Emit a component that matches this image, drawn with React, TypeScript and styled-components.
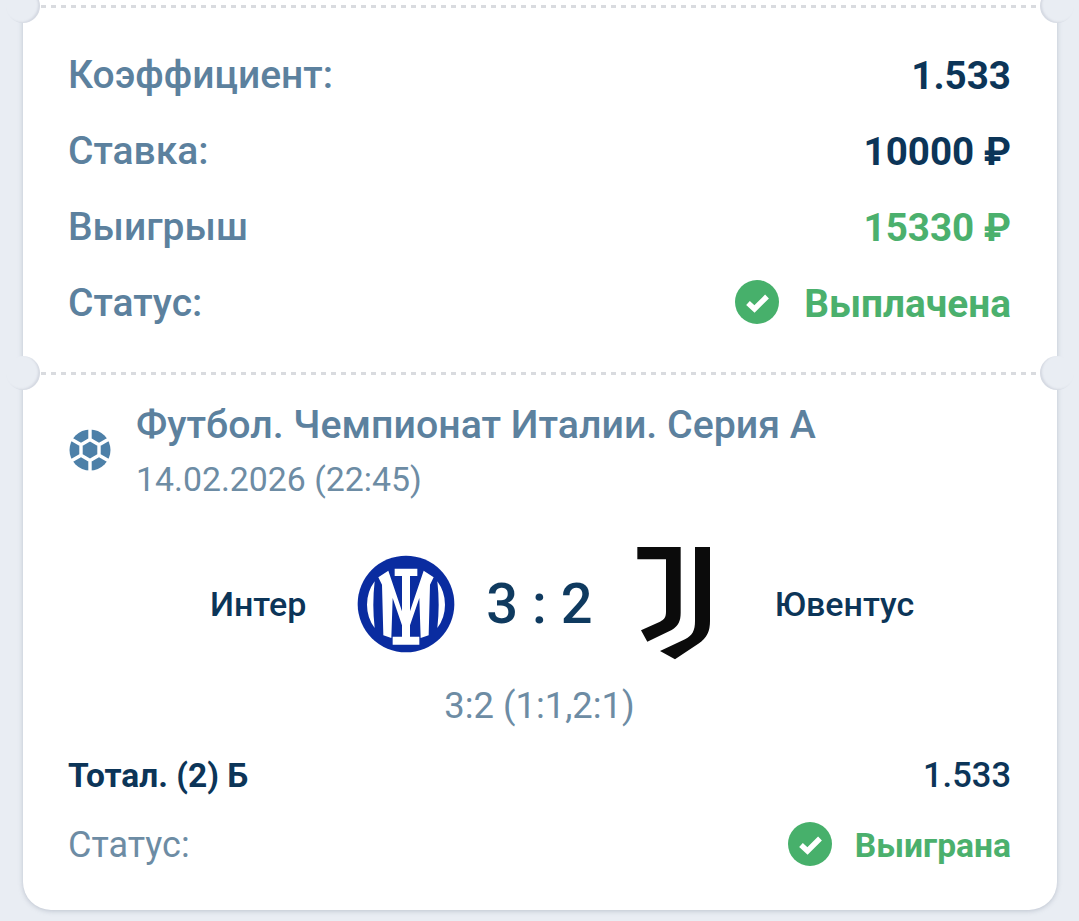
import React from 'react'
import styled, { createGlobalStyle } from 'styled-components'

const GlobalStyle = createGlobalStyle`
  html, body {
    margin: 0;
    padding: 0;
    background: #e9edf3;
    font-family: Roboto, "Noto Sans", sans-serif;
  }
`

const Page = styled.div`
  width: 1079px;
  height: 921px;
  overflow: hidden;
  box-sizing: border-box;
  padding: 0 22px 0 23px;
`

const Card = styled.div`
  position: relative;
  display: flow-root;
  height: 910px;
  background: #ffffff;
  border-radius: 0 0 28px 28px;
  box-shadow: 0 1px 5px rgba(120, 130, 150, 0.4);
`

const Notch = styled.span<{ $side: 'left' | 'right'; $top: number }>`
  position: absolute;
  top: ${p => p.$top - 17}px;
  ${p => p.$side}: -17px;
  width: 34px;
  height: 34px;
  border-radius: 50%;
  background: #e9edf3;
  box-shadow: inset ${p => (p.$side === 'left' ? -2 : 2)}px -1px 2px rgba(120, 130, 150, 0.18);
`

const Divider = styled.div<{ $top?: number }>`
  height: 3px;
  margin: 0 18px;
  margin-top: ${p => p.$top ?? 0}px;
  background: repeating-linear-gradient(90deg, #d9dbdf 0 5px, transparent 5px 10px);
`

const Summary = styled.div`
  padding: 29px 46px 31px 45px;
`

const Row = styled.div<{ $height: number }>`
  display: flex;
  align-items: center;
  justify-content: space-between;
  height: ${p => p.$height}px;
`

const Label = styled.span`
  font-size: 39px;
  font-weight: 500;
  color: #5c819e;
`

const Value = styled.span<{ $green?: boolean }>`
  font-size: 38.6px;
  font-weight: 700;
  color: ${p => (p.$green ? '#4bb06d' : '#0c3558')};
`

const Status = styled.span<{ $small?: boolean }>`
  display: flex;
  align-items: center;
  gap: ${p => (p.$small ? 23 : 25)}px;
  font-size: ${p => (p.$small ? 33.6 : 38.8)}px;
  font-weight: 700;
  color: #4bb06d;
`

const Event = styled.div`
  padding: 22px 46px 0 45px;
`

const EventHead = styled.div`
  display: flex;
  align-items: center;
  gap: 25px;
`

const EventTitle = styled.div`
  padding-top: 2px;
  font-size: 39.3px;
  font-weight: 500;
  line-height: 53px;
  color: #5c819e;
`

const EventDate = styled.div`
  font-size: 33.8px;
  line-height: 55px;
  color: #6d8ca4;
`

const Match = styled.div`
  display: grid;
  grid-template-columns: 1fr auto 1fr;
  align-items: center;
  height: 120px;
  margin-top: 34px;
`

const Side = styled.div<{ $right?: boolean }>`
  display: flex;
  align-items: center;
  justify-content: ${p => (p.$right ? 'flex-start' : 'flex-end')};
  gap: ${p => (p.$right ? 55 : 52)}px;
`

const Team = styled.span`
  font-size: 34px;
  font-weight: 500;
  color: #0c3558;
`

const Score = styled.div`
  font-size: 56px;
  font-weight: 500;
  padding: 0 32px;
  color: #0f3a5f;
`

const SubScore = styled.div`
  margin-top: 20px;
  font-size: 36.4px;
  line-height: 50px;
  text-align: center;
  color: #6d8ca4;
`

const Bets = styled.div`
  margin-top: 9px;
`

const BetName = styled.span`
  font-size: 33.5px;
  font-weight: 700;
  color: #0c3558;
`

const BetOdd = styled.span`
  font-size: 34.5px;
  font-weight: 500;
  color: #0c3558;
`

const StatusLabel = styled.span`
  font-size: 36px;
  color: #6d8ca4;
`

const BallSvg = styled.svg`
  margin: 0 0 4px 1px;
  flex: none;
`

const CheckSvg = styled.svg`
  margin-top: -3px;
  flex: none;
`

const InterSvg = styled.svg`
  margin: 0 -8px;
`

const JuveSvg = styled.svg`
  margin-left: 5px;
`

const CheckIcon = () => (
  <CheckSvg width="44" height="44" viewBox="0 0 44 44">
    <circle cx="22" cy="22" r="22" fill="#47b06b" />
    <path d="M13 23l6.5 6L32 16.5" fill="none" stroke="#fff" strokeWidth="5.4" />
  </CheckSvg>
)

const BallIcon = () => (
  <BallSvg width="42" height="42" viewBox="0 0 42 42">
    <circle cx="21" cy="21" r="20.5" fill="#4d80a8" />
    <path
      d="M21 10.5L30 15.8V26.2L21 31.5L12 26.2V15.8ZM21 10.5V0M30 15.8L40 10M30 26.2L40 32M21 31.5V42M12 26.2L2 32M12 15.8L2 10"
      fill="none"
      stroke="#fff"
      strokeWidth="3.4"
    />
  </BallSvg>
)

const InterLogo = () => (
  <InterSvg width="112" height="112" viewBox="0 0 336 336">
    <circle cx="168" cy="168" r="145" fill="#0a2ca0" />
    <path d="M74 100A118 118 0 0 0 74 240Q66 170 74 100Z" fill="#fff" />
    <path d="M262 100A118 118 0 0 1 262 240Q270 170 262 100Z" fill="#fff" />
    <path d="M134 62H202V84H180V266H208V290H128V266H156V84H134Z" fill="#fff" />
    <path d="M85 88L115 68L156 190V232L128 150L124 270L100 262L96 110Z" fill="#fff" />
    <path d="M251 88L221 68L180 190V232L208 150L212 270L236 262L240 110Z" fill="#fff" />
  </InterSvg>
)

const JuveLogo = () => (
  <JuveSvg width="90" height="125" viewBox="0 0 270 375">
    <path d="M22 18H152V215C152 240 145 255 125 267L52 302L33 268L90 242C103 235 108 228 108 212V55H22Z" fill="#0b0b0b" />
    <path d="M195 18H240V240C240 270 232 290 205 308L135 355L90 330L165 295C188 283 195 268 195 240Z" fill="#0b0b0b" />
  </JuveSvg>
)

const App = () => {
  return (
    <Page>
      <GlobalStyle />
      <Card>
        <Notch $side="left" $top={6} />
        <Notch $side="right" $top={6} />
        <Notch $side="left" $top={373} />
        <Notch $side="right" $top={373} />
        <Divider $top={5} />
        <Summary>
          <Row $height={76}>
            <Label>Коэффициент:</Label>
            <Value>1.533</Value>
          </Row>
          <Row $height={76}>
            <Label>Ставка:</Label>
            <Value>10000 ₽</Value>
          </Row>
          <Row $height={76}>
            <Label>Выигрыш</Label>
            <Value $green>15330 ₽</Value>
          </Row>
          <Row $height={76}>
            <Label>Статус:</Label>
            <Status>
              <CheckIcon />
              Выплачена
            </Status>
          </Row>
        </Summary>
        <Divider />
        <Event>
          <EventHead>
            <BallIcon />
            <div>
              <EventTitle>Футбол. Чемпионат Италии. Серия А</EventTitle>
              <EventDate>14.02.2026 (22:45)</EventDate>
            </div>
          </EventHead>
          <Match>
            <Side>
              <Team>Интер</Team>
              <InterLogo />
            </Side>
            <Score>3 : 2</Score>
            <Side $right>
              <JuveLogo />
              <Team>Ювентус</Team>
            </Side>
          </Match>
          <SubScore>3:2 (1:1,2:1)</SubScore>
          <Bets>
            <Row $height={70}>
              <BetName>Тотал. (2) Б</BetName>
              <BetOdd>1.533</BetOdd>
            </Row>
            <Row $height={70}>
              <StatusLabel>Статус:</StatusLabel>
              <Status $small>
                <CheckIcon />
                Выиграна
              </Status>
            </Row>
          </Bets>
        </Event>
      </Card>
    </Page>
  )
}

export default App
